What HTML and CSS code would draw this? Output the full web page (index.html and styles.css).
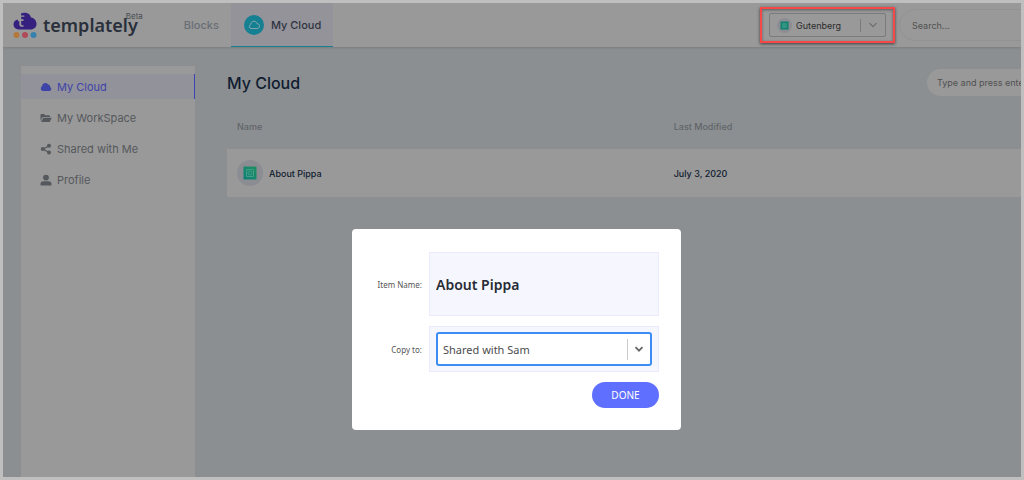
FILE: index.html
```html
<!DOCTYPE html>
<html lang="en">
<head>
<meta charset="utf-8">
<title>Templately - My Cloud</title>
<link rel="stylesheet" href="styles.css">
</head>
<body>
<div class="frame">
  <header class="topbar">
    <a class="brand" href="#">
      <svg class="brand-mark" viewBox="0 0 24 26" aria-hidden="true">
        <path d="M5.500 17.500A5 5 0 0 1 .5 12.500C.5 10 2 8 4.500 7.500L5.300 9.300H6.300V12.500Q6.300 14.800 8.500 14.800H10.500V13.200H9.300Q8.200 13.200 8.200 12V9H10.500V7.300H8.200V4.800H11.300V3.500H8V1.500C9.500.7 11 .5 12.500 .8C15.500 1.200 17.500 3 18 5.500C21.500 6 23.500 8.800 23.500 12C23.500 15.200 21 17.500 17.500 17.500Z" fill="#35207f"/>
        <circle cx="3.500" cy="23" r="3" fill="#b3783a"/><circle cx="12" cy="23" r="3" fill="#b14a58"/><circle cx="20.500" cy="23" r="3" fill="#3680ad"/>
      </svg>
      <span class="brand-name">templately</span><sup class="brand-tag">Beta</sup>
    </a>
    <nav class="tabs">
      <a class="tab" href="#">Blocks</a>
      <a class="tab tab-active" href="#">
        <svg class="tab-icon" viewBox="0 0 20 20" aria-hidden="true"><circle cx="10" cy="10" r="10" fill="#168093"/><path d="M7 13.500A2 2 0 0 1 6.700 9.600C6.800 7.500 8.200 6.200 10 6.200C11.600 6.200 12.700 7.200 13 8.700C14.800 8.800 15.500 9.900 15.500 11.100C15.500 12.500 14.500 13.500 13.200 13.500Z" fill="none" stroke="#8fa9ad" stroke-width=".9"/></svg>
        My Cloud
      </a>
    </nav>
    <div class="highlight">
      <div class="platform">
        <svg class="platform-icon" viewBox="0 0 26 26" aria-hidden="true"><circle cx="13" cy="13" r="13" fill="#8c8d93"/><path d="M6 6H20V20H6Z" fill="#128271"/><path d="M9.500 9.500H16.500V16.500H9.500Z" fill="#2f9480" stroke="#459c88"/></svg>
        <select class="platform-select" aria-label="Platform"><option>Gutenberg</option></select>
        <svg class="chevron" viewBox="0 0 10 10" aria-hidden="true"><path d="M1.500 3.200L5 6.700L8.500 3.200" fill="none" stroke="#6d6d6d" stroke-width="1.200"/></svg>
      </div>
    </div>
    <input class="search" type="search" placeholder="Search..." aria-label="Search">
  </header>
  <div class="body">
    <aside class="sidebar">
      <a class="side-link side-active" href="#"><svg viewBox="0 0 12 12" aria-hidden="true"><path d="M3 10A2.600 2.600 0 0 1 2 5.200A3.300 3.300 0 0 1 8 3.400A2 2 0 0 1 10 6A2.100 2.100 0 0 1 9.700 10Z"/></svg>My Cloud</a>
      <a class="side-link" href="#"><svg viewBox="0 0 12 12" aria-hidden="true"><path d="M.5 9V3Q.5 2 1.500 2H4L5.200 3.200H9Q10 3.200 10 4.200V5H3.500Q2.500 5 2 5.900Z"/><path d="M3.400 5.700H11.800L10 9.400Q9.700 10 9 10H1Z"/></svg>My WorkSpace</a>
      <a class="side-link" href="#"><svg viewBox="0 0 12 12" aria-hidden="true"><path d="M9 3L3 6L9 9.500" fill="none" stroke="currentColor" stroke-width="1.300"/><circle cx="9" cy="2.800" r="2"/><circle cx="2.800" cy="6" r="2"/><circle cx="9" cy="9.500" r="2"/></svg>Shared with Me</a>
      <a class="side-link" href="#"><svg viewBox="0 0 12 12" aria-hidden="true"><circle cx="6" cy="3.600" r="2.900"/><path d="M.5 11.500V10Q.5 7.300 3.500 7.300H8.500Q11.500 7.300 11.500 10V11.500Z"/></svg>Profile</a>
    </aside>
    <main class="content">
      <div class="content-head">
        <h1 class="title">My Cloud</h1>
        <input class="filter" type="text" placeholder="Type and press enter" aria-label="Filter items">
      </div>
      <table class="items">
        <thead><tr><th class="col-name">Name</th><th>Last Modified</th></tr></thead>
        <tbody><tr>
          <td><div class="item"><svg class="item-icon" viewBox="0 0 26 26" aria-hidden="true"><defs><linearGradient id="tile" x1="0" y1="1" x2="1" y2="0"><stop offset="0" stop-color="#0c7f78"/><stop offset="1" stop-color="#20905f"/></linearGradient></defs><circle cx="13" cy="13" r="13" fill="#8c8d93"/><path d="M6.500 6.500H19.500V19.500H6.500Z" fill="url(#tile)"/><path d="M9.500 9.500H16.500V16.500H9.500Z" fill="none" stroke="#459c88"/><circle cx="13" cy="13" r="2" fill="none" stroke="#459c88"/></svg>About Pippa</div></td>
          <td>July 3, 2020</td>
        </tr></tbody>
      </table>
    </main>
  </div>
  <div class="overlay">
    <form class="dialog" role="dialog" aria-label="Copy item">
      <label class="label" for="item-name">Item Name:</label>
      <div class="field field-name"><input class="name-input" id="item-name" type="text" value="About Pippa"></div>
      <label class="label" for="copy-to">Copy to:</label>
      <div class="field field-copy">
        <div class="picker">
          <select class="picker-select" id="copy-to"><option>Shared with Sam</option></select>
          <svg class="chevron picker-chevron" viewBox="0 0 10 10" aria-hidden="true"><path d="M1.500 3.200L5 6.700L8.500 3.200" fill="none" stroke="#666" stroke-width="1.800"/></svg>
        </div>
      </div>
      <button class="done" type="button">DONE</button>
    </form>
  </div>
</div>
</body>
</html>
```
FILE: styles.css
```css
* { box-sizing: border-box; }
body { margin: 0; font-family: Inter, "Open Sans", sans-serif; font-size: 11px; }
a { color: inherit; text-decoration: none; }
input, select, button { font: inherit; margin: 0; }
svg { flex: none; }

.frame {
  position: relative;
  display: flex;
  flex-direction: column;
  min-height: 100vh;
  border: 3px solid #bfbfbf;
  background: #8b8f92;
  overflow: hidden;
}

.topbar {
  display: flex;
  align-items: center;
  height: 44px;
  padding-left: 10px;
  background: #999;
  box-shadow: 0 1px 2px rgba(0, 0, 0, 0.12);
}
.brand { display: flex; align-items: center; color: #29303c; }
.brand-mark { width: 24px; height: 26px; margin-right: 6px; }
.brand-name { font: 600 18px/18px "Noto Sans", sans-serif; }
.brand-tag { align-self: flex-start; margin-left: -12px; font-size: 8px; line-height: 8px; color: #4a4d52; }
.tabs { display: flex; align-self: stretch; margin-left: 28px; }
.tab {
  display: flex;
  align-items: center;
  gap: 7px;
  padding: 0 12px 0 13px;
  font-size: 11px;
  font-weight: 500;
  color: #696e75;
}
.tab-active { color: #303342; background: #939399; border-bottom: 1px solid #168093; }
.tab-icon { width: 20px; height: 20px; }

.highlight {
  margin-left: auto;
  padding: 4px 7px;
  border: 2px solid #f64848;
  box-shadow: 0 1px 3px rgba(0, 0, 0, 0.6), inset 0 1px 3px rgba(0, 0, 0, 0.4);
}
.platform {
  display: flex;
  align-items: center;
  width: 117px;
  height: 24px;
  padding: 0 7px;
  border: 1px solid #7b7b7b;
  border-radius: 2px;
}
.platform-icon { width: 15px; height: 15px; }
.platform-select {
  flex: 1;
  min-width: 0;
  height: 13px;
  margin-right: 7px;
  padding: 0 0 0 4px;
  border: 0;
  border-right: 1px solid #7b7b7b;
  appearance: none;
  background: none;
  color: #2b2b2b;
  font-size: 9px;
}
.chevron { width: 10px; height: 10px; pointer-events: none; }
.search {
  width: 150px;
  height: 32px;
  margin: 0 -28px 0 4px;
  padding: 0 12px;
  border: 1px solid #929292;
  border-radius: 16px;
  background: none;
  font-size: 9px;
}
.search::placeholder, .filter::placeholder { color: #515151; opacity: 1; }

.body { display: flex; flex: 1; padding: 19px 0 0 18px; }
.sidebar {
  display: flex;
  flex-direction: column;
  gap: 6px;
  width: 174px;
  padding-top: 8px;
  background: #999;
}
.side-link {
  display: flex;
  align-items: center;
  gap: 5px;
  height: 25px;
  padding-left: 19px;
  color: #55585c;
}
.side-link svg { width: 12px; height: 12px; fill: currentColor; }
.side-active { color: #3e43a8; background: #92929a; border-right: 1px solid #3e43b0; }

.content { flex: 1; min-width: 0; padding-left: 32px; }
.content-head { display: flex; align-items: center; justify-content: space-between; padding-top: 3px; }
.title { margin: 0; font-size: 16px; line-height: 26px; font-weight: 500; color: #101c30; }
.filter {
  width: 124px;
  height: 27px;
  margin-right: -30px;
  padding: 0 10px;
  border: 0;
  border-radius: 14px;
  background: #999;
  font-size: 9px;
}
.items { width: 100%; border-collapse: collapse; font-size: 9px; font-weight: 500; color: #101c30; }
.items th { height: 53px; padding: 8px 10px 0; text-align: left; font-weight: 500; color: #616568; }
.items td { height: 48px; padding: 0 10px; background: #999; }
.col-name { width: 55%; }
.item { display: flex; align-items: center; gap: 6px; }
.item-icon { width: 26px; height: 26px; }

.overlay { position: absolute; inset: 0; display: flex; justify-content: center; align-items: flex-start; padding: 226px 0 0 9px; }
.dialog {
  display: grid;
  grid-template-columns: auto 230px;
  align-items: center;
  gap: 10px 7px;
  width: 329px;
  padding: 23px 22px 22px;
  border-radius: 4px;
  background: #fff;
  font-family: "Noto Sans", sans-serif;
}
.label { text-align: right; font-size: 8px; color: #555; }
.field { border: 1px solid #e9ebfd; background: #f6f7fe; }
.field-name { height: 64px; padding: 0 6px; }
.field-copy { padding: 5px 6px; }
.name-input { width: 100%; height: 100%; padding: 0; border: 0; background: none; outline: 0; font-size: 14px; font-weight: 600; color: #272b33; }
.picker { display: flex; align-items: center; height: 34px; border: 2px solid #3c8ef3; border-radius: 3px; background: #fff; }
.picker-select {
  flex: 1;
  min-width: 0;
  height: 21px;
  padding: 0 0 0 5px;
  border: 0;
  border-right: 1px solid #ccc;
  appearance: none;
  background: none;
  outline: 0;
  font-size: 11px;
  color: #4d4d4d;
}
.picker-chevron { margin: 0 6px; }
.done {
  grid-column: 2;
  justify-self: end;
  width: 67px;
  height: 26px;
  padding: 0;
  border: 0;
  border-radius: 14px;
  background: #5f6fff;
  color: #fff;
  font-size: 10px;
}
```
